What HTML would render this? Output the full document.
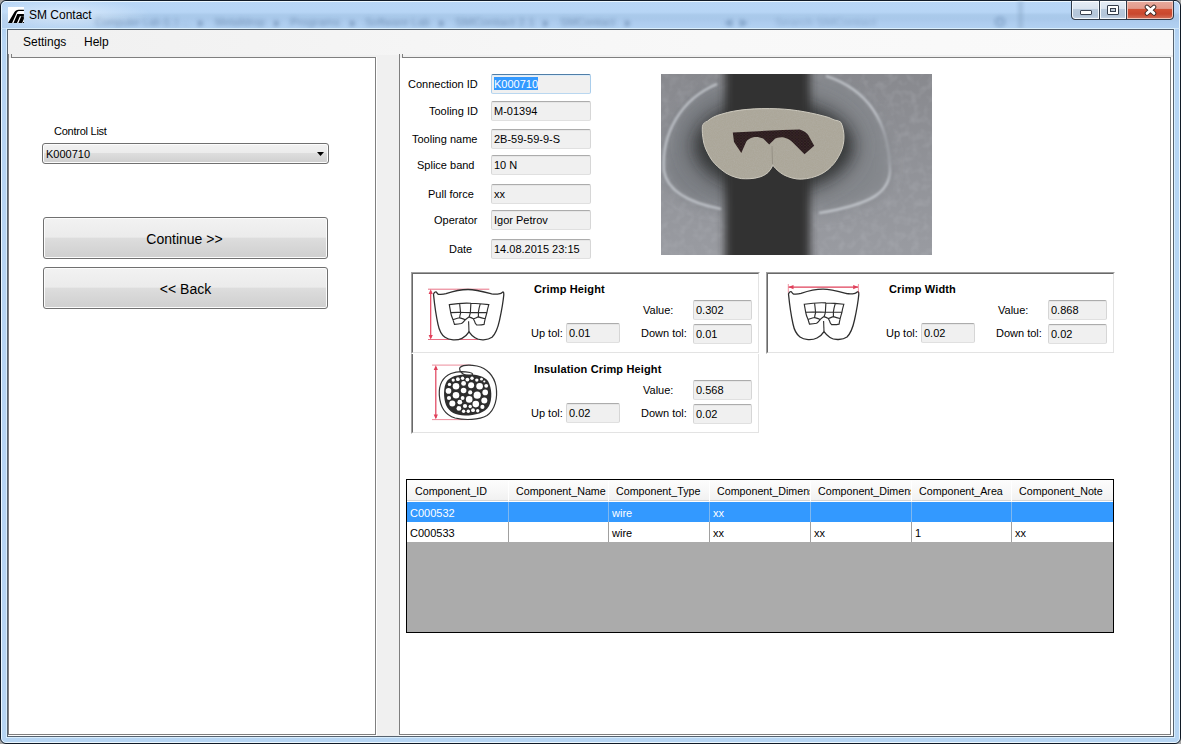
<!DOCTYPE html>
<html><head><meta charset="utf-8">
<style>
*{margin:0;padding:0;box-sizing:border-box}
html,body{width:1181px;height:744px;overflow:hidden;background:#a6a6a6}
body{position:relative;font-family:"Liberation Sans",sans-serif;color:#000}
.a{position:absolute}
#frame{left:0;top:0;width:1181px;height:744px;border:1px solid #101a26;border-radius:6px 6px 6px 6px;overflow:hidden;
 background:linear-gradient(180deg,#b8d6f6 0px,#b7d5f5 11px,#aacaeb 14px,#a9c8ea 18px,#aecdef 22px,#b2d1f2 28px,#b6d5f4 40px,#b6d5f3 100%)}
#frame:before{content:"";position:absolute;left:0;top:0;right:0;bottom:0;border:1px solid rgba(240,250,255,.9);border-radius:5px}
#frame:after{content:"";position:absolute;left:0;top:0;width:200px;height:28px;background:radial-gradient(ellipse 90px 16px at 60px 14px,rgba(235,245,255,.7),rgba(235,245,255,0))}
#client{left:7px;top:29px;width:1167px;height:708px;border:1px solid #56626f;background:#f0f0f0;box-shadow:0 0 0 1px rgba(220,240,253,.9)}
.t{position:absolute;white-space:nowrap;line-height:1}
#menu{left:8px;top:30px;width:1165px;height:25px;background:linear-gradient(90deg,#f0f0f0 0,#f5f5f5 35%,#f8f8f8 60%,#fafafa 100%)}
.panel{position:absolute;background:#fff}
.tb{position:absolute;height:20px;border:1px solid #d6d6d6;border-top-color:#acacac;border-bottom-color:#e0e0e0;border-radius:2px;background:#f0f0f0;box-shadow:inset 0 1px 0 #e6e6e6}
.tbt{position:absolute;font-size:11px;white-space:nowrap;line-height:1}
.lbl{position:absolute;font-size:11px;white-space:nowrap;line-height:1}
.btn{position:absolute;border:1px solid #707070;border-radius:3px;
 background:linear-gradient(180deg,#f2f2f2 0%,#ebebeb 48%,#dddddd 50%,#cfcfcf 100%);box-shadow:inset 0 0 0 1px #fcfcfc}
.f3d{position:absolute;border-top:1px solid #a0a0a0;border-left:1px solid #a0a0a0;border-right:1px solid #fff;border-bottom:1px solid #fff;background:#fff}
.f3d>.in{position:absolute;left:0;top:0;right:0;bottom:0;border-top:1px solid #696969;border-left:1px solid #696969;border-right:1px solid #e3e3e3;border-bottom:1px solid #e3e3e3}
.bold{font-weight:bold;font-size:11px;letter-spacing:0.15px}
</style></head><body>
<div id="frame" class="a"></div>
<svg class="a" style="left:0;top:0" width="1181" height="29" viewBox="0 0 1181 29">
<defs><filter id="tb" x="-5%" y="-100%" width="110%" height="300%"><feGaussianBlur stdDeviation="2.1"/></filter></defs>
<g filter="url(#tb)" opacity=".6">
<text x="95" y="26" textLength="95" lengthAdjust="spacingAndGlyphs" font-family="Liberation Sans" font-size="11" fill="#4a6a90">Computer Lab (L:) ...</text>
<text x="215" y="26" textLength="50" lengthAdjust="spacingAndGlyphs" font-family="Liberation Sans" font-size="11" fill="#4a6a90">Metalldrop</text>
<text x="290" y="26" textLength="50" lengthAdjust="spacingAndGlyphs" font-family="Liberation Sans" font-size="11" fill="#4a6a90">Programs</text>
<text x="365" y="26" textLength="65" lengthAdjust="spacingAndGlyphs" font-family="Liberation Sans" font-size="11" fill="#4a6a90">Software Lab</text>
<text x="455" y="26" textLength="80" lengthAdjust="spacingAndGlyphs" font-family="Liberation Sans" font-size="11" fill="#4a6a90">SMContact 2.1</text>
<text x="560" y="26" textLength="55" lengthAdjust="spacingAndGlyphs" font-family="Liberation Sans" font-size="11" fill="#4a6a90">SMContact</text>
<path d="M198.5 20 L203.5 23.5 L198.5 27Z" fill="#3f5f86"/>
<path d="M274.5 20 L279.5 23.5 L274.5 27Z" fill="#3f5f86"/>
<path d="M350.5 20 L355.5 23.5 L350.5 27Z" fill="#3f5f86"/>
<path d="M439.5 20 L444.5 23.5 L439.5 27Z" fill="#3f5f86"/>
<path d="M543.5 20 L548.5 23.5 L543.5 27Z" fill="#3f5f86"/>
<path d="M625.5 20 L630.5 23.5 L625.5 27Z" fill="#3f5f86"/>
<path d="M724 23 L732 19 L732 27Z M748 23 L740 19 L740 27Z" fill="#5a7ca3"/>
<text x="775" y="26" textLength="101" lengthAdjust="spacingAndGlyphs" font-family="Liberation Sans" font-size="11" fill="#6f90b5">Search SMContact</text>
<circle cx="1000" cy="22" r="4" fill="none" stroke="#5577a0" stroke-width="2"/>
<rect x="1019" y="0" width="3" height="29" fill="#7d9bbb"/>
</g>
<rect x="1" y="28" width="1179" height="1" fill="#d4e8fa" opacity=".8"/>
</svg>

<!-- title -->
<svg class="a" style="left:8px;top:7px" width="16" height="16" viewBox="0 0 16 16">
<rect width="16" height="16" fill="#fff"/>
<path d="M0 15.9 L4.1 15.9 L8.0 7.2 C8.6 5.2 9.5 3.9 11 3.9 L15.9 3.9 L15.9 2.8 L10.6 2.8 C8.5 2.8 7.3 3.7 6.3 5.3 Z" fill="#000"/>
<path d="M5.5 15.9 L9.0 15.9 L11.9 9.3 L15.9 9.3 L15.9 7.0 L9.3 7.0 Z" fill="#000"/>
<path d="M10.4 15.9 L14.2 15.9 L15.9 11.8 L15.9 9.3 L13.2 9.3 Z" fill="#000"/>
<rect x="15" y="15" width="1" height="1" fill="#111"/>
</svg>
<div class="t" style="left:29px;top:9px;font-size:12px;color:#000">SM Contact</div>

<div class="a" style="left:1071px;top:0px;width:103px;height:20px;border:1px solid #2f3a48;border-radius:0 0 4px 4px;overflow:hidden;background:#2f3a48">
 <div class="a" style="left:0;top:0;width:27px;height:18px;border:1px solid #f4f8fc;border-top-color:#fff;border-radius:0 0 0 3px;background:linear-gradient(180deg,#e4ecf5 0,#d9e3ee 45%,#b8c9dc 47%,#b3c5d9 85%,#c2d2e4 100%)"></div>
 <div class="a" style="left:28px;top:0;width:26px;height:18px;border:1px solid #f4f8fc;border-top-color:#fff;background:linear-gradient(180deg,#e4ecf5 0,#d9e3ee 45%,#b8c9dc 47%,#b3c5d9 85%,#c2d2e4 100%)"></div>
 <div class="a" style="left:55px;top:0;width:46px;height:18px;border:1px solid #f2c2b6;border-top-color:#fbe9e4;border-radius:0 0 3px 0;background:linear-gradient(180deg,#e7a89b 0,#e39a8b 40%,#d24f33 47%,#c9472e 75%,#d26a54 100%)"></div>
</div>
<div class="a" style="left:1080px;top:10px;width:12px;height:5px;background:#fff;border:1px solid #3a4352;border-radius:1px"></div>
<div class="a" style="left:1107px;top:5px;width:12px;height:10px;border:1px solid #343d4b;background:#fff;border-radius:1px"></div>
<div class="a" style="left:1110px;top:8px;width:6px;height:4px;border:1px solid #343d4b;background:#c2ccd8"></div>
<svg class="a" style="left:1144px;top:4px" width="13" height="12" viewBox="0 0 13 12">
<path d="M3 3 L10 9.4 M10 3 L3 9.4" stroke="#3a2622" stroke-width="4.6" stroke-linecap="round"/>
<path d="M3 3 L10 9.4 M10 3 L3 9.4" stroke="#fff" stroke-width="2.8" stroke-linecap="round"/>
</svg>
<!-- client -->
<div id="client" class="a"></div>
<div id="menu" class="a"></div>
<div class="t" style="left:23px;top:36px;font-size:12px">Settings</div>
<div class="t" style="left:84px;top:36px;font-size:12px">Help</div>

<!-- left panel -->
<div class="a" style="left:9px;top:58px;width:366px;height:676px;background:#fff"></div>
<div class="a" style="left:8px;top:54px;width:1px;height:681px;background:#7f7f7f"></div>
<div class="a" style="left:11px;top:54px;width:1px;height:4px;background:#7f7f7f"></div>
<div class="a" style="left:11px;top:57px;width:365px;height:1px;background:#7f7f7f"></div>
<div class="a" style="left:375px;top:57px;width:1px;height:678px;background:#7f7f7f"></div>
<div class="a" style="left:8px;top:734px;width:368px;height:1px;background:#7f7f7f"></div>
<div class="a" style="left:376px;top:57px;width:1px;height:679px;background:#fff"></div>
<div class="a" style="left:8px;top:735px;width:369px;height:1px;background:#fff"></div>

<div class="lbl" style="left:54px;top:126px;letter-spacing:-0.25px">Control List</div>
<div class="btn" style="left:42px;top:143px;width:287px;height:21px"></div>
<div class="lbl" style="left:46px;top:149px">K000710</div>
<svg class="a" style="left:316px;top:151px" width="9" height="6"><path d="M1 1H8L4.5 5Z" fill="#000"/></svg>

<div class="btn" style="left:43px;top:217px;width:285px;height:42px"></div>
<div class="t" style="left:42px;top:232px;width:285px;text-align:center;font-size:14px">Continue &gt;&gt;</div>
<div class="btn" style="left:43px;top:267px;width:285px;height:42px"></div>
<div class="t" style="left:43px;top:282px;width:285px;text-align:center;font-size:14px">&lt;&lt; Back</div>

<!-- right panel -->
<div class="a" style="left:400px;top:58px;width:770px;height:676px;background:#fff"></div>
<div class="a" style="left:399px;top:54px;width:1px;height:681px;background:#7f7f7f"></div>
<div class="a" style="left:402px;top:54px;width:1px;height:4px;background:#7f7f7f"></div>
<div class="a" style="left:402px;top:57px;width:769px;height:1px;background:#7f7f7f"></div>
<div class="a" style="left:1170px;top:57px;width:1px;height:678px;background:#7f7f7f"></div>
<div class="a" style="left:399px;top:734px;width:772px;height:1px;background:#7f7f7f"></div>
<div class="a" style="left:1171px;top:57px;width:2px;height:679px;background:#fff"></div>
<div class="a" style="left:399px;top:735px;width:774px;height:1px;background:#fff"></div>

<!-- form -->
<div class="lbl" style="left:408px;top:79px">Connection ID</div>
<div class="tb" style="left:491px;top:74px;width:100px;border-color:#4f7ea8 #a9cdeb #b9d7f0 #a9cdeb;box-shadow:inset 0 1px 0 #dcecf9"></div>
<div class="a" style="left:494px;top:77px;width:44px;height:13px;background:#3399ff"></div>
<div class="tbt" style="left:494px;top:79px;color:#fff">K000710</div>

<div class="lbl" style="left:429px;top:106px">Tooling ID</div>
<div class="tb" style="left:491px;top:101px;width:100px"></div>
<div class="tbt" style="left:494px;top:106px">M-01394</div>

<div class="lbl" style="left:412px;top:134px">Tooling name</div>
<div class="tb" style="left:491px;top:129px;width:100px"></div>
<div class="tbt" style="left:494px;top:134px">2B-59-59-9-S</div>

<div class="lbl" style="left:417px;top:160px">Splice band</div>
<div class="tb" style="left:491px;top:155px;width:100px"></div>
<div class="tbt" style="left:494px;top:160px">10 N</div>

<div class="lbl" style="left:428px;top:189px">Pull force</div>
<div class="tb" style="left:491px;top:184px;width:100px"></div>
<div class="tbt" style="left:494px;top:189px">xx</div>

<div class="lbl" style="left:434px;top:215px">Operator</div>
<div class="tb" style="left:491px;top:210px;width:100px"></div>
<div class="tbt" style="left:494px;top:215px">Igor Petrov</div>

<div class="lbl" style="left:449px;top:244px">Date</div>
<div class="tb" style="left:491px;top:239px;width:100px"></div>
<div class="tbt" style="left:494px;top:244px">14.08.2015 23:15</div>

<!-- PHOTO -->
<svg class="a" style="left:661px;top:74px" width="271" height="181" viewBox="0 0 271 181">
<defs>
<filter id="b10" x="-50%" y="-50%" width="200%" height="200%"><feGaussianBlur stdDeviation="10"/></filter>
<filter id="b7" x="-50%" y="-50%" width="200%" height="200%"><feGaussianBlur stdDeviation="7"/></filter>
<filter id="b4" x="-50%" y="-50%" width="200%" height="200%"><feGaussianBlur stdDeviation="4"/></filter>
<filter id="b25" x="-50%" y="-50%" width="200%" height="200%"><feGaussianBlur stdDeviation="2.5"/></filter>
<filter id="b1" x="-50%" y="-50%" width="200%" height="200%"><feGaussianBlur stdDeviation="0.8"/></filter>
<filter id="b05"><feGaussianBlur stdDeviation="0.35"/></filter>
<filter id="nz" x="0" y="0" width="100%" height="100%"><feTurbulence type="fractalNoise" baseFrequency="0.9" numOctaves="2" seed="3"/><feColorMatrix type="matrix" values="0 0 0 0 0.5  0 0 0 0 0.5  0 0 0 0 0.5  0 0 0 1.2 -0.35"/></filter>
<filter id="nz2" x="0" y="0" width="100%" height="100%"><feTurbulence type="fractalNoise" baseFrequency="0.12" numOctaves="2" seed="7"/><feColorMatrix type="matrix" values="0 0 0 0 0.62  0 0 0 0 0.64  0 0 0 0 0.68  0 0 0 0.35 -0.15"/></filter>
<pattern id="hc" width="3.2" height="2.8" patternUnits="userSpaceOnUse"><rect width="3.2" height="2.8" fill="#4a3a39"/><circle cx="1.6" cy="1.4" r="1.1" fill="#2a1b1e"/><circle cx="0" cy="0" r="1.1" fill="#2a1b1e"/><circle cx="3.2" cy="0" r="1.1" fill="#2a1b1e"/><circle cx="0" cy="2.8" r="1.1" fill="#2a1b1e"/><circle cx="3.2" cy="2.8" r="1.1" fill="#2a1b1e"/></pattern>
<clipPath id="pc"><rect width="271" height="181"/></clipPath>
<clipPath id="crc"><path d="M41.4 52.3 C42 49.5 44 48 46.2 47.4 C50 44 55 41.5 60.8 40.1 C75 35.5 95 34 116.8 34.8 C135 35.5 152 39 167.8 43.5 C170 44.5 172 45.5 174 46.2 C177 46.5 179 47.5 180 48.6 C182 53 183 58 183 63.2 C183 68 182 73 180 77.8 C177 84 174 89 170.3 92.4 C166 97 161 100 155.7 102 C149 104.5 142 105.5 136.2 105 C129 104 123 101.5 119.2 98.5 C116 96 113.5 93.5 111.9 91.2 C110.5 94 109 96.5 107 98.5 C104 101 101 102.5 97.3 103.4 C92 104.8 86 105 80.3 104.6 C73 103.5 66 100.5 60.8 96 C55 91.5 51 87 48.7 82.7 C45.5 77 43.5 72.5 42.6 68 C41.5 62 41 57 41.4 52.3Z"/></clipPath>
</defs>
<g clip-path="url(#pc)">
<linearGradient id="bgg" x1="0" y1="0" x2="0" y2="1"><stop offset="0" stop-color="#88898e"/><stop offset="1" stop-color="#999ba1"/></linearGradient>
<rect width="271" height="181" fill="url(#bgg)"/>
<rect width="271" height="181" filter="url(#nz2)"/>
<path d="M56 10 C20 25 0 60 3 97 C6 115 24 128 60 135 L75 120 L75 20Z" fill="#7d8085" filter="url(#b7)"/>
<path d="M165 2 C205 15 228 45 229 97 C228 118 212 130 158 139 L140 120 L140 5Z" fill="#84878c" filter="url(#b7)"/>
<ellipse cx="112" cy="72" rx="84" ry="50" fill="#55575a" filter="url(#b10)"/>
<ellipse cx="113" cy="72" rx="76" ry="42" fill="#363739" filter="url(#b7)"/>
<rect x="64" y="-20" width="85" height="230" fill="#303133" filter="url(#b4)"/>
<path d="M56 10 C20 25 0 60 3 97 C6 115 24 128 60 135" stroke="#c2c6cc" stroke-width="2.2" fill="none" filter="url(#b1)"/>
<linearGradient id="rg" gradientUnits="userSpaceOnUse" x1="0" y1="0" x2="0" y2="140"><stop offset="0" stop-color="#c4c8ce"/><stop offset=".28" stop-color="#c4c8ce"/><stop offset=".45" stop-color="#9da0a6"/><stop offset=".62" stop-color="#9da0a6"/><stop offset=".78" stop-color="#c4c8ce"/><stop offset="1" stop-color="#c4c8ce"/></linearGradient>
<path d="M165 2 C205 15 228 45 229 97 C228 118 212 130 158 139" stroke="url(#rg)" stroke-width="2.2" fill="none" filter="url(#b1)"/>
<path d="M41.4 52.3 C42 49.5 44 48 46.2 47.4 C50 44 55 41.5 60.8 40.1 C75 35.5 95 34 116.8 34.8 C135 35.5 152 39 167.8 43.5 C170 44.5 172 45.5 174 46.2 C177 46.5 179 47.5 180 48.6 C182 53 183 58 183 63.2 C183 68 182 73 180 77.8 C177 84 174 89 170.3 92.4 C166 97 161 100 155.7 102 C149 104.5 142 105.5 136.2 105 C129 104 123 101.5 119.2 98.5 C116 96 113.5 93.5 111.9 91.2 C110.5 94 109 96.5 107 98.5 C104 101 101 102.5 97.3 103.4 C92 104.8 86 105 80.3 104.6 C73 103.5 66 100.5 60.8 96 C55 91.5 51 87 48.7 82.7 C45.5 77 43.5 72.5 42.6 68 C41.5 62 41 57 41.4 52.3Z" fill="#aca799" stroke="#cfcbbf" stroke-width="1" filter="url(#b05)"/>
<g clip-path="url(#crc)"><rect x="40" y="30" width="150" height="80" filter="url(#nz)" opacity=".35"/></g>
<path d="M71.8 58.4 L97.3 57.2 L121.6 56 L138.7 55.5 C144 57 147 60 148.4 63.2 L153.2 71.8 L143.5 80.3 L133.8 70.5 C130 66 125 63.5 121.6 63.2 C118 63 115 64 114.3 64.5 L108.2 70.5 L102.2 64.5 C99 63 95 62.5 92.4 63.2 C89 64 86 66 85.1 68.1 L80.3 79 L73 68.1Z" fill="url(#hc)" filter="url(#b05)"/>
<path d="M111.5 90 L111 72" stroke="#8f8a7f" stroke-width="0.8"/>
</g>
</svg>

<!-- crimp panels -->
<div class="f3d" style="left:411px;top:352px;width:349px;height:82px"><div class="in"></div></div>
<div class="t bold" style="left:534px;top:364px">Insulation Crimp Height</div>
<div class="lbl" style="left:643px;top:385px">Value:</div>
<div class="tb" style="left:693px;top:380px;width:59px"></div>
<div class="tbt" style="left:696px;top:385px">0.568</div>
<div class="lbl" style="left:531px;top:408px">Up tol:</div>
<div class="tb" style="left:566px;top:403px;width:54px"></div>
<div class="tbt" style="left:569px;top:408px">0.02</div>
<div class="lbl" style="left:641px;top:408px">Down tol:</div>
<div class="tb" style="left:693px;top:404px;width:59px"></div>
<div class="tbt" style="left:696px;top:409px">0.02</div>
<div class="f3d" style="left:411px;top:272px;width:349px;height:82px"><div class="in"></div></div>
<div class="t bold" style="left:534px;top:284px">Crimp Height</div>
<div class="lbl" style="left:643px;top:305px">Value:</div>
<div class="tb" style="left:693px;top:300px;width:59px"></div>
<div class="tbt" style="left:696px;top:305px">0.302</div>
<div class="lbl" style="left:531px;top:328px">Up tol:</div>
<div class="tb" style="left:566px;top:323px;width:54px"></div>
<div class="tbt" style="left:569px;top:328px">0.01</div>
<div class="lbl" style="left:641px;top:328px">Down tol:</div>
<div class="tb" style="left:693px;top:324px;width:59px"></div>
<div class="tbt" style="left:696px;top:329px">0.01</div>
<div class="f3d" style="left:766px;top:272px;width:349px;height:82px"><div class="in"></div></div>
<div class="t bold" style="left:889px;top:284px">Crimp Width</div>
<div class="lbl" style="left:998px;top:305px">Value:</div>
<div class="tb" style="left:1048px;top:300px;width:59px"></div>
<div class="tbt" style="left:1051px;top:305px">0.868</div>
<div class="lbl" style="left:886px;top:328px">Up tol:</div>
<div class="tb" style="left:921px;top:323px;width:54px"></div>
<div class="tbt" style="left:924px;top:328px">0.02</div>
<div class="lbl" style="left:996px;top:328px">Down tol:</div>
<div class="tb" style="left:1048px;top:324px;width:59px"></div>
<div class="tbt" style="left:1051px;top:329px">0.02</div>

<svg class="a" style="left:422px;top:282px" width="90" height="65" viewBox="0 0 90 65">
<path d="M6 7.2H67.3 M6 57.5H56" stroke="#e0405a" stroke-width="1" opacity=".75"/>
<path d="M8.7 9V56" stroke="#e0405a" stroke-width="1.2"/>
<path d="M8.7 7.2 L6.6 12 L10.8 12Z M8.7 57.5 L6.6 53 L10.8 53Z" fill="#e0405a"/>
<g transform="translate(11,7.3)"><path d="M0.5 5 C1 3 2.5 2.3 3.4 2.8 C4 3.5 4.5 4.8 5.5 5 C8 5.2 11 5 13 4.4 C20 2 28 0.2 35 0.2 C43 0.2 51 2.5 58.6 4.5 C61 5 64 5 67 4.3 C68.5 4 69.5 2.6 70 2.6 C71 3.2 70.9 4.5 70.8 5.5 C70 14 68.5 22 66.5 31 C65 38 63 44 59 48 C55 51 46 51.5 42 48.5 C39 46.5 37 44 36 42.6 C34.5 45 32 47.5 29 49 C24 51.5 16 51 12 48 C8 45 6 40 5 35 C3 26 1.5 15 0.5 5Z" fill="#fff" stroke="#2e2e2e" stroke-width="1.3"/>
<path d="M36 42.6 L35.6 32" stroke="#2e2e2e" stroke-width="1.1" fill="none"/>
<path d="M16.3 15.3 C24 14 32 13.6 38 13.9 C44 14 50 14.5 55.8 15.3 C55 18 54.3 20.5 53.9 23.3 C53.2 26 52.5 28 52 30.4 C51.6 32 51.3 33.5 51.1 35.1 C48.5 35.7 46 35.8 43.6 35.6 C42.5 34.5 41.8 33 41.7 32.3 C41 31 40.5 30 40.3 29.5 C39 28.8 37.5 28.2 36 27.6 C34.5 28.5 33.3 29.5 32.3 30.4 C31 32 29.8 33.5 28.5 34.2 C26 34.8 23.5 35 21.5 35.1 C21 33.5 20.5 32 20 30.4 C19 28 18 25.5 17.7 23.3 C17.2 20.5 16.8 18 16.3 15.3Z
 M17.7 23.3 C24 22.8 30 23.2 37.4 23.3 C43 23 48 23 53.9 23.3
 M26.6 14.2 C27 17.5 27.3 20.5 27.6 23.8 C27 25.5 26.8 27 26.6 28.5 C24.5 29 22 29.8 20 30.4
 M26.6 28.5 C28.5 29 30.5 29.5 32.3 30.4
 M37.9 13.9 C37.7 17 37.5 20 37.4 23.3 C37 25 36.5 26.5 36 27.6
 M47.3 14.4 C46.5 17 45.8 20 45.4 22.9 C45.4 24.5 45.4 26 45.4 27.6 C43.5 28.3 41.8 29 40.3 29.5
 M45.4 27.6 C47.5 28.3 50 29 52 29.5" fill="none" stroke="#2e2e2e" stroke-width="1.15"/></g>
</svg>
<svg class="a" style="left:777px;top:278px" width="90" height="65" viewBox="0 0 90 65">
<g transform="translate(11,11)"><path d="M0.5 5 C1 3 2.5 2.3 3.4 2.8 C4 3.5 4.5 4.8 5.5 5 C8 5.2 11 5 13 4.4 C20 2 28 0.2 35 0.2 C43 0.2 51 2.5 58.6 4.5 C61 5 64 5 67 4.3 C68.5 4 69.5 2.6 70 2.6 C71 3.2 70.9 4.5 70.8 5.5 C70 14 68.5 22 66.5 31 C65 38 63 44 59 48 C55 51 46 51.5 42 48.5 C39 46.5 37 44 36 42.6 C34.5 45 32 47.5 29 49 C24 51.5 16 51 12 48 C8 45 6 40 5 35 C3 26 1.5 15 0.5 5Z" fill="#fff" stroke="#2e2e2e" stroke-width="1.3"/>
<path d="M36 42.6 L35.6 32" stroke="#2e2e2e" stroke-width="1.1" fill="none"/>
<path d="M16.3 15.3 C24 14 32 13.6 38 13.9 C44 14 50 14.5 55.8 15.3 C55 18 54.3 20.5 53.9 23.3 C53.2 26 52.5 28 52 30.4 C51.6 32 51.3 33.5 51.1 35.1 C48.5 35.7 46 35.8 43.6 35.6 C42.5 34.5 41.8 33 41.7 32.3 C41 31 40.5 30 40.3 29.5 C39 28.8 37.5 28.2 36 27.6 C34.5 28.5 33.3 29.5 32.3 30.4 C31 32 29.8 33.5 28.5 34.2 C26 34.8 23.5 35 21.5 35.1 C21 33.5 20.5 32 20 30.4 C19 28 18 25.5 17.7 23.3 C17.2 20.5 16.8 18 16.3 15.3Z
 M17.7 23.3 C24 22.8 30 23.2 37.4 23.3 C43 23 48 23 53.9 23.3
 M26.6 14.2 C27 17.5 27.3 20.5 27.6 23.8 C27 25.5 26.8 27 26.6 28.5 C24.5 29 22 29.8 20 30.4
 M26.6 28.5 C28.5 29 30.5 29.5 32.3 30.4
 M37.9 13.9 C37.7 17 37.5 20 37.4 23.3 C37 25 36.5 26.5 36 27.6
 M47.3 14.4 C46.5 17 45.8 20 45.4 22.9 C45.4 24.5 45.4 26 45.4 27.6 C43.5 28.3 41.8 29 40.3 29.5
 M45.4 27.6 C47.5 28.3 50 29 52 29.5" fill="none" stroke="#2e2e2e" stroke-width="1.15"/></g>
<path d="M11.5 9.1H81" stroke="#e0405a" stroke-width="1.2"/>
<path d="M11.3 6V14.5 M81.4 6V14.5" stroke="#e0405a" stroke-width="0.8" opacity=".7"/>
<path d="M11.5 9.1 L16.5 7 L16.5 11.2Z M81.2 9.1 L76.2 7 L76.2 11.2Z" fill="#e0405a"/>
</svg>
<svg class="a" style="left:425px;top:358px" width="80" height="70" viewBox="0 0 80 70">
<path d="M7 7.1H46 M7 61.6H44" stroke="#e0405a" stroke-width="1" opacity=".6"/>
<path d="M10.8 9V60" stroke="#e0405a" stroke-width="1.2"/>
<path d="M10.8 7.3 L8.7 12 L12.9 12Z M10.8 61.3 L8.7 56.6 L12.9 56.6Z" fill="#e0405a"/>
<path d="M35 9.5 C38 7 45 6.8 52 8 C62 10 69 18 71 28 C73 40 70 52 62 57.5 C54 62 40 62.5 30 60 C20 57 15 48 14.3 37 C13.8 27 18 19 26 15.5 C31 13.5 38 13 45 14.5 C48 15 48.5 17 46 17.5 C40 18.5 36 15 35 12.5 C34.5 11 34.5 10 35 9.5Z" fill="#fff" stroke="#333" stroke-width="1.2"/>
<path d="M44 16.5 C34 16 26 18 22 23 C18 29 18.5 40 21 47 C24 54 31 57.5 40 57.5 C50 57.5 60 55 64 48 C67.5 41 67 30 63 23 C59 18 52 16.5 44 16.5Z" fill="#2e2e2e"/>
<circle cx="28.2" cy="22.1" r="1.6" fill="#fff"/><circle cx="32.9" cy="21.2" r="1.9" fill="#fff"/><circle cx="37.6" cy="20.2" r="1.7" fill="#fff"/><circle cx="42.4" cy="21.6" r="1.9" fill="#fff"/><circle cx="47" cy="20.2" r="1.7" fill="#fff"/><circle cx="51.8" cy="22.1" r="1.7" fill="#fff"/><circle cx="56.5" cy="21.2" r="1.4" fill="#fff"/><circle cx="59.3" cy="23.5" r="1.1" fill="#fff"/><circle cx="24.5" cy="26.4" r="1.7" fill="#fff"/><circle cx="31" cy="28.2" r="3.3" fill="#fff"/><circle cx="38.6" cy="25.4" r="2.4" fill="#fff"/><circle cx="46.1" cy="27.3" r="3" fill="#fff"/><circle cx="54.6" cy="28.2" r="3.3" fill="#fff"/><circle cx="61.2" cy="27.8" r="1.9" fill="#fff"/><circle cx="23.5" cy="32.9" r="2.8" fill="#fff"/><circle cx="31" cy="37.2" r="3.3" fill="#fff"/><circle cx="38.6" cy="32.5" r="2.8" fill="#fff"/><circle cx="45.2" cy="34.4" r="2.1" fill="#fff"/><circle cx="52.2" cy="37.2" r="3.6" fill="#fff"/><circle cx="60.2" cy="34.4" r="2.8" fill="#fff"/><circle cx="24" cy="40" r="2.1" fill="#fff"/><circle cx="37.6" cy="40" r="1.9" fill="#fff"/><circle cx="44.2" cy="41.4" r="3.3" fill="#fff"/><circle cx="59.3" cy="42.4" r="3" fill="#fff"/><circle cx="27.3" cy="45.6" r="3" fill="#fff"/><circle cx="34.8" cy="44.2" r="2.4" fill="#fff"/><circle cx="50.8" cy="46.1" r="3.3" fill="#fff"/><circle cx="33.9" cy="50.4" r="2.4" fill="#fff"/><circle cx="40" cy="48" r="2.1" fill="#fff"/><circle cx="45.2" cy="48.5" r="1.7" fill="#fff"/><circle cx="57.4" cy="48.9" r="2.1" fill="#fff"/><circle cx="38.6" cy="53.2" r="1.7" fill="#fff"/><circle cx="43.3" cy="53.2" r="1.7" fill="#fff"/><circle cx="48" cy="52.2" r="1.9" fill="#fff"/><circle cx="52.7" cy="52.7" r="1.7" fill="#fff"/>
</svg>
<!-- grid -->
<div class="a" style="left:406px;top:479px;width:708px;height:154px;border:1px solid #000;background:#ababab"></div>
<div class="a" style="left:407px;top:480px;width:706px;height:21px;background:linear-gradient(180deg,#fdfdfd 0,#f8f8f8 50%,#f1f1f1 100%);border-bottom:1px solid #d5d5d5;box-shadow:0 1px 0 #fff"></div>
<div class="a" style="left:407px;top:502px;width:706px;height:20px;background:#3399ff"></div>
<div class="a" style="left:407px;top:522px;width:706px;height:20px;background:#fff"></div>
<div class="a" style="left:508px;top:481px;width:1px;height:20px;background:#fff"></div>
<div class="a" style="left:508px;top:502px;width:1px;height:20px;background:#80b8ef"></div>
<div class="a" style="left:508px;top:522px;width:1px;height:20px;background:#a0a0a0"></div>
<div class="a" style="left:407px;top:481px;width:101px;height:20px;overflow:hidden"><div class="lbl" style="left:8px;top:5px;font-size:10.7px">Component_ID</div></div>
<div class="a" style="left:608px;top:481px;width:1px;height:20px;background:#fff"></div>
<div class="a" style="left:608px;top:502px;width:1px;height:20px;background:#80b8ef"></div>
<div class="a" style="left:608px;top:522px;width:1px;height:20px;background:#a0a0a0"></div>
<div class="a" style="left:509px;top:481px;width:99px;height:20px;overflow:hidden"><div class="lbl" style="left:7px;top:5px;font-size:10.7px">Component_Name</div></div>
<div class="a" style="left:709px;top:481px;width:1px;height:20px;background:#fff"></div>
<div class="a" style="left:709px;top:502px;width:1px;height:20px;background:#80b8ef"></div>
<div class="a" style="left:709px;top:522px;width:1px;height:20px;background:#a0a0a0"></div>
<div class="a" style="left:609px;top:481px;width:100px;height:20px;overflow:hidden"><div class="lbl" style="left:7px;top:5px;font-size:10.7px">Component_Type</div></div>
<div class="a" style="left:810px;top:481px;width:1px;height:20px;background:#fff"></div>
<div class="a" style="left:810px;top:502px;width:1px;height:20px;background:#80b8ef"></div>
<div class="a" style="left:810px;top:522px;width:1px;height:20px;background:#a0a0a0"></div>
<div class="a" style="left:710px;top:481px;width:100px;height:20px;overflow:hidden"><div class="lbl" style="left:7px;top:5px;font-size:10.7px">Component_Dimens</div></div>
<div class="a" style="left:911px;top:481px;width:1px;height:20px;background:#fff"></div>
<div class="a" style="left:911px;top:502px;width:1px;height:20px;background:#80b8ef"></div>
<div class="a" style="left:911px;top:522px;width:1px;height:20px;background:#a0a0a0"></div>
<div class="a" style="left:811px;top:481px;width:100px;height:20px;overflow:hidden"><div class="lbl" style="left:7px;top:5px;font-size:10.7px">Component_Dimens</div></div>
<div class="a" style="left:1011px;top:481px;width:1px;height:20px;background:#fff"></div>
<div class="a" style="left:1011px;top:502px;width:1px;height:20px;background:#80b8ef"></div>
<div class="a" style="left:1011px;top:522px;width:1px;height:20px;background:#a0a0a0"></div>
<div class="a" style="left:912px;top:481px;width:99px;height:20px;overflow:hidden"><div class="lbl" style="left:7px;top:5px;font-size:10.7px">Component_Area</div></div>
<div class="a" style="left:1012px;top:481px;width:100px;height:20px;overflow:hidden"><div class="lbl" style="left:7px;top:5px;font-size:10.7px">Component_Note</div></div>
<div class="lbl" style="left:410px;top:508px;color:#fff">C000532</div>
<div class="lbl" style="left:410px;top:528px">C000533</div>
<div class="lbl" style="left:612px;top:508px;color:#fff">wire</div>
<div class="lbl" style="left:612px;top:528px">wire</div>
<div class="lbl" style="left:713px;top:508px;color:#fff">xx</div>
<div class="lbl" style="left:713px;top:528px">xx</div>
<div class="lbl" style="left:814px;top:528px">xx</div>
<div class="lbl" style="left:915px;top:528px">1</div>
<div class="lbl" style="left:1015px;top:528px">xx</div>
</body></html>
